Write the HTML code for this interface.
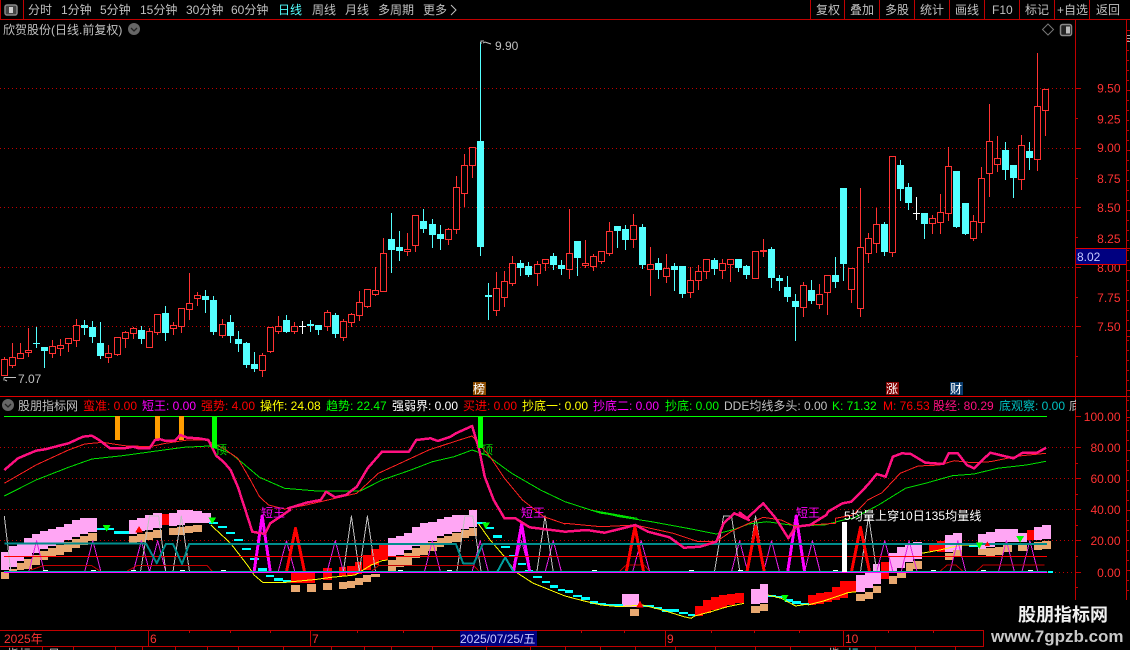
<!DOCTYPE html>
<html><head><meta charset="utf-8"><title>K线</title>
<style>
html,body{margin:0;padding:0;background:#000;width:1130px;height:650px;overflow:hidden}
svg{display:block}
text{font-family:"Liberation Sans","WenQuanYi Zen Hei","Noto Sans CJK SC",sans-serif;font-size:12px}
.g{fill:#c0c0c0}.r{fill:#ff3232}.m{fill:#ff00ff}.y{fill:#ffff00}.n{fill:#00ff00}.w{fill:#fff}.p{fill:#ff1080}.t{fill:#00c0c0}
</style></head><body>
<svg id="s" xmlns="http://www.w3.org/2000/svg" width="1130" height="650" viewBox="0 0 1130 650">
<rect width="1130" height="650" fill="#000"/>
<g id="chart" shape-rendering="crispEdges"></g>
<g shape-rendering="crispEdges">
<rect x="0" y="19" width="1130" height="1" fill="#c00000"/>
<rect x="0" y="0" width="1" height="19" fill="#c00000"/><rect x="23" y="0" width="1" height="19" fill="#c00000"/>
<rect x="810" y="0" width="1" height="19" fill="#c00000"/><rect x="844" y="0" width="1" height="19" fill="#c00000"/><rect x="879" y="0" width="1" height="19" fill="#c00000"/><rect x="914" y="0" width="1" height="19" fill="#c00000"/><rect x="949" y="0" width="1" height="19" fill="#c00000"/><rect x="984" y="0" width="1" height="19" fill="#c00000"/><rect x="1019" y="0" width="1" height="19" fill="#c00000"/><rect x="1054" y="0" width="1" height="19" fill="#c00000"/><rect x="1089" y="0" width="1" height="19" fill="#c00000"/>
<rect x="1075" y="20" width="1" height="580" fill="#c00000"/>
<rect x="1126" y="20" width="1" height="580" fill="#c00000"/>
<rect x="0" y="396" width="1126" height="1" fill="#e00000"/>
<rect x="0" y="630" width="983" height="1" fill="#c00000"/><rect x="0" y="646" width="983" height="1" fill="#c00000"/>
<rect x="983" y="630" width="1" height="17" fill="#c00000"/>
<rect x="148" y="630" width="1" height="16" fill="#c00000"/><rect x="310" y="630" width="1" height="16" fill="#c00000"/><rect x="665" y="630" width="1" height="16" fill="#c00000"/><rect x="843" y="630" width="1" height="16" fill="#c00000"/>
<rect x="1127" y="35" width="3" height="1" fill="#aaa"/><rect x="1127" y="38" width="3" height="1" fill="#aaa"/><rect x="1127" y="41" width="3" height="1" fill="#aaa"/>
</g>
<rect x="5" y="5" width="12" height="10" rx="2" fill="#444" stroke="#888" stroke-width="1.5"/><rect x="9" y="7" width="4" height="6" fill="#ccc"/>
<text x="28" y="14" class="g">分时</text><text x="61" y="14" class="g">1分钟</text><text x="100" y="14" class="g">5分钟</text><text x="140" y="14" class="g">15分钟</text><text x="186" y="14" class="g">30分钟</text><text x="231" y="14" class="g">60分钟</text>
<text x="278" y="14" style="fill:#54ffff">日线</text><text x="312" y="14" class="g">周线</text><text x="345" y="14" class="g">月线</text><text x="378" y="14" class="g">多周期</text><text x="423" y="14" class="g">更多</text>
<path d="M451 5l5 5-5 5" fill="none" stroke="#c0c0c0"/>
<text x="816" y="14" class="g">复权</text><text x="850" y="14" class="g">叠加</text><text x="885" y="14" class="g">多股</text><text x="920" y="14" class="g">统计</text><text x="955" y="14" class="g">画线</text><text x="992" y="14" class="g">F10</text><text x="1025" y="14" class="g">标记</text><text x="1057" y="14" class="g">+自选</text><text x="1096" y="14" class="g">返回</text>
<text x="3" y="34" class="g">欣贺股份(日线.前复权)</text>
<circle cx="134" cy="29" r="6" fill="#666"/><path d="M131 28l3 3 3-3" fill="none" stroke="#222" stroke-width="1.3"/>
<path d="M1048 24l5.500 5.500-5.500 5.500-5.500-5.500z" fill="none" stroke="#777"/>
<rect x="1060.500" y="24.500" width="11" height="11" rx="2" fill="#222" stroke="#888" stroke-width="1.500"/><rect x="1066" y="26.500" width="4" height="7" fill="#bbb"/>
<text x="1120.500" y="92.500" text-anchor="end" class="r">9.50</text><text x="1120.500" y="123.500" text-anchor="end" class="r">9.25</text><text x="1120.500" y="152" text-anchor="end" class="r">9.00</text><text x="1120.500" y="183" text-anchor="end" class="r">8.75</text><text x="1120.500" y="212" text-anchor="end" class="r">8.50</text><text x="1120.500" y="243" text-anchor="end" class="r">8.25</text><text x="1120.500" y="272" text-anchor="end" class="r">8.00</text><text x="1120.500" y="302" text-anchor="end" class="r">7.75</text><text x="1120.500" y="331" text-anchor="end" class="r">7.50</text>
<rect x="1076" y="248" width="50" height="17" fill="#000080"/><rect x="1076" y="248" width="50" height="1" fill="#e00000"/><rect x="1076" y="264" width="50" height="1" fill="#e00000"/>
<text x="1077" y="261" style="fill:#c8c8ff">8.02</text>
<text x="495" y="50" class="g">9.90</text><path d="M481 44V41h3M483 43l2-1 3 1 3 1" fill="none" stroke="#c0c0c0"/>
<text x="18" y="383" class="g">7.07</text><path d="M4 377.500h12M4 377.500v3M5 380l2 1" fill="none" stroke="#c0c0c0"/>
<rect x="473" y="382" width="13" height="13" fill="#8a4a00"/><text x="473" y="393" class="w">榜</text>
<rect x="886" y="382" width="13" height="13" fill="#800000"/><text x="886" y="393" class="w">涨</text>
<rect x="950" y="382" width="13" height="13" fill="#0a3c6e"/><text x="950" y="393" class="w">财</text>
<circle cx="8" cy="405" r="6" fill="#666"/><path d="M5 404l3 3 3-3" fill="none" stroke="#222" stroke-width="1.300"/>
<text x="18" y="410" class="g">股朋指标网</text>
<text x="83" y="410" style="fill:#ff0000">蛮准: 0.00</text><text x="142" y="410" class="m">短王: 0.00</text><text x="201" y="410" style="fill:#ff0000">强势: 4.00</text><text x="260" y="410" class="y">操作: 24.08</text><text x="326" y="410" class="n">趋势: 22.47</text><text x="392" y="410" class="w">强弱界: 0.00</text><text x="463" y="410" style="fill:#ff0000">买进: 0.00</text><text x="522" y="410" class="y">抄底一: 0.00</text><text x="593" y="410" class="m">抄底二: 0.00</text><text x="665" y="410" class="n">抄底: 0.00</text><text x="724" y="410" class="g">DDE均线多头: 0.00</text><text x="832" y="410" class="n">K: 71.32</text><text x="883" y="410" style="fill:#ff0000">M: 76.53</text><text x="933" y="410" class="p">股经: 80.29</text><text x="999" y="410" class="t">底观察: 0.00</text><text x="1069" y="410" class="g">底</text>
<rect x="1076" y="398" width="50" height="18" fill="#000"/>
<text x="1120.500" y="421" text-anchor="end" class="r">100.00</text><text x="1120.500" y="452" text-anchor="end" class="r">80.00</text><text x="1120.500" y="483" text-anchor="end" class="r">60.00</text><text x="1120.500" y="514" text-anchor="end" class="r">40.00</text><text x="1120.500" y="545" text-anchor="end" class="r">20.00</text><text x="1120.500" y="577" text-anchor="end" class="r">0.00</text>
<text x="261" y="517" class="m">短王</text><text x="521" y="517" class="m">短王</text><text x="796" y="517" class="m">短王</text>
<text x="215" y="454" style="fill:#00d000">顶</text><text x="481" y="454" style="fill:#00d000">顶</text>
<rect x="212" y="416" width="5" height="32" fill="#00ff00" shape-rendering="crispEdges"/><rect x="478" y="416" width="5" height="32" fill="#00ff00" shape-rendering="crispEdges"/>
<text x="844" y="520" class="w" style="letter-spacing:.1px">5均量上穿10日135均量线</text>
<text x="4" y="643" class="r">2025年</text><text x="150" y="643" class="r">6</text><text x="312" y="643" class="r">7</text>
<rect x="460" y="631" width="77" height="15" fill="#000080"/><text x="460" y="643" style="fill:#c8c8ff">2025/07/25/五</text>
<text x="667" y="643" class="r">9</text><text x="845" y="643" class="r">10</text>
<text x="7" y="658" class="g">指标</text><text x="48" y="658" class="g">日</text><text x="828" y="658" class="g">指</text><text x="847" y="658" style="fill:#54ffff">标</text>
<text x="1018" y="621" style="font-size:18px;font-weight:bold;fill:#f0f0f0">股朋指标网</text>
<text x="991" y="642" style="font-size:17px;font-weight:bold;fill:#c8c8c8">www.7gpzb.com</text>
<script>
var g=document.getElementById('chart'),NS='http://www.w3.org/2000/svg';
function add(t,a){var e=document.createElementNS(NS,t);for(var k in a)e.setAttribute(k,a[k]);g.appendChild(e);return e}
function rect(x,y,w,h,f){add('rect',{x:Math.round(x),y:Math.round(y),width:Math.max(1,Math.round(w)),height:Math.max(1,Math.round(h)),fill:f})}
function S(xo,yo,s){return s.trim().split(/\s+/).map(function(p){var a=p.split(',').map(Number);return [xo+a[0]/2.775,yo+a[1]/3]})}
var A=function(s){return S(0,390,s)},B=function(s){return S(565,390,s)},C=function(s){return S(0,510,s)},D=function(s){return S(565,510,s)};
function pl(pts,c,w){add('polyline',{points:pts.map(function(p){return p[0].toFixed(1)+','+p[1].toFixed(1)}).join(' '),fill:'none',stroke:c,'stroke-width':w,'stroke-linejoin':'round'})}
function blocks(xo,s,c){s.trim().split(/\s+/).forEach(function(p){var a=p.split(',').map(Number);var x0=Math.round(xo+a[0]/2.775),x1=Math.round(xo+a[1]/2.775);rect(x0,510+a[2]/3,x1-x0,(a[3]-a[2])/3,c)})}
function dot(y){add('path',{d:'M0 '+y+'H1075',stroke:'#c00000','stroke-dasharray':'1 3',fill:'none'})}
[88.5,148.5,207.5,267.5,326.5,447.5,478.5,509.5,540.5].forEach(dot);
add('path',{d:'M1047 572.500H1075',stroke:'#c00000','stroke-dasharray':'1 3',fill:'none'});
[88,148,207,267,326,447,478,509,540,572,416].forEach(function(y){rect(1075,y,6,1,'#c00000')});
[118,178,237,297,356,463,494,525,556,587].forEach(function(y){rect(1075,y,3,1,'#c00000')});
for(var y=30;y<600;y+=10){rect(1127,y,y%60==30?3:2,1,'#c00000')}
rect(1126,19,4,1,'#c00000');rect(1126,248,4,1,'#c00000');rect(1126,336,4,1,'#c00000');rect(1126,396,4,1,'#c00000');rect(1126,417,4,1,'#c00000');
var T=[525,637,750,992,1118];T.forEach(function(z){rect(z/2.775,630,1,3,'#c00000')});
[45,165,405,525,650,895,1020].forEach(function(z){rect(565+z/2.775,630,1,3,'#c00000')});
[42,73,115,142,175,207,238,283,331,364,391,432,486,530,565,600,635,675,715,755,790,835,875,915,955].forEach(function(x){rect(x,646,1,4,'#c00000')});
/* candles */
var cd="r,472,478,524,526 r,430,472,494,500 r,430,460,473,473 r,385,450,455,468 c,381,430,432,440 c,441,441,453,500 r,420,439,458,470 r,418,436,443,465 r,415,415,428,453 r,357,376,419,438 c,361,375,384,402 c,363,381,411,426 c,366,429,468,474 r,435,460,470,486 r,412,412,461,465 r,393,397,413,441 r,380,385,398,414 c,378,390,417,429 r,385,394,440,440 r,343,343,395,402 c,318,339,399,420 r,366,376,383,402 r,325,325,377,396 r,220,310,326,357 r,277,286,293,315 c,270,288,300,336 c,289,300,396,402 r,357,373,404,411 c,345,366,408,426 c,393,417,432,453 c,426,429,495,501 c,456,492,507,513 r,459,466,509,528 r,382,382,452,456 r,348,379,392,399 c,345,360,396,396 r,366,379,392,399 w,363,379,381,399 c,360,372,378,393 c,375,375,390,402 r,330,337,378,390 c,339,345,402,411 r,357,364,411,420 r,339,343,365,378 r,273,307,344,360 r,268,268,318,321 r,201,271,281,285 r,114,160,272,272 c,39,117,150,216 c,93,141,153,180 r,99,148,152,165 r,46,46,134,153 c,27,63,87,96 c,57,72,105,141 c,75,102,117,147 r,84,88,116,132 r,-72,-39,86,100 r,-138,-105,-21,18 r,-159,-159,-105,-70 c,-474,-177,141,165 c,250,286,290,357 r,217,265,329,345 r,213,244,290,318 r,168,190,248,255 c,180,190,204,225 c,186,198,225,228 r,183,193,218,255 r,178,178,188,210 c,159,168,195,207 c,180,195,207,222 r,27,160,208,234 c,123,123,174,225 r,120,190,194,200 r,162,169,197,210 r,154,154,182,188 r,66,94,158,164 c,78,78,93,141 c,75,87,120,147 r,42,76,116,141 c,72,81,195,204 r,141,193,208,285 c,175,189,210,234 r,162,205,227,246 c,190,198,210,270 c,198,198,282,291 r,201,241,276,291 r,195,214,241,267 r,178,178,214,234 c,174,180,207,222 r,177,190,211,234 r,178,178,193,243 c,177,177,204,213 c,195,198,225,234 r,154,154,233,233 r,117,150,154,168 c,141,147,234,261 c,225,234,243,270 c,228,261,291,303 c,282,303,321,420 r,246,256,322,348 c,240,270,303,309 r,252,283,311,324 r,226,226,275,342 c,171,225,246,261 c,-36,-36,192,240 r,204,205,266,306 r,-36,142,323,348 r,100,115,160,186 r,24,73,130,156 c,66,72,156,165 r,-132,-132,155,168 c,-120,-105,-34,0 c,-51,-39,9,27 w,-9,38,40,57 c,39,39,72,114 r,45,54,68,99 r,-18,36,65,99 r,-159,-102,39,60 c,-87,-87,81,81 c,9,9,102,102 r,45,63,113,120 r,-99,-66,67,96 r,-288,-177,-81,-12 r,-192,-126,-108,-87 c,-174,-150,-90,-63 c,-105,-105,-66,-9 r,-195,-165,-63,-33 c,-174,-147,-126,-93 r,-441,-282,-123,-90 r,-333,-333,-270,-195".split(' ');
cd.forEach(function(s,i){var a=s.split(','),t=a[0],h=+a[1],o=+a[2],b=+a[3],l=+a[4];
 var X=Math.floor(4+8.076*i),Y=function(z){return Math.round(200+z/3)};
 var c=t=='r'?'#ff3232':t=='c'?'#54ffff':'#ffffff';
 rect(X,Y(h),1,Y(l)-Y(h)+1,c);
 if(t=='r'){rect(X-3,Y(o),7,Y(b)-Y(o)+1,c);if(Y(b)-Y(o)>1)rect(X-2,Y(o)+1,5,Y(b)-Y(o)-1,'#000')}
 else{rect(X-3,Y(o),7,Math.max(1,Y(b)-Y(o)),c)}
});
rect(4,416,1043,1,'#00ff00');
rect(115,416,5,24,'#ff9c00');rect(155,416,5,24,'#ff9c00');rect(179,416,5,24,'#ff9c00');
/* lower panel blocks */
var PK='#ffa6f4',TN='#e8a870',RD='#ff0000',CY='#00ffff',YL='#ffff00';
blocks(0,"3,25,125,180 25,47,108,172 47,67,100,155 67,89,85,142 89,111,72,130 111,133,64,117 133,155,57,108 155,178,50,100 178,200,43,90 200,222,30,82 222,245,24,72 245,269,24,65 358,380,30,72 380,403,25,65 403,425,15,60 425,450,10,55 470,492,8,48 492,514,0,45 514,536,0,40 536,560,3,38 560,585,8,38 1076,1098,85,140 1098,1120,78,135 1120,1143,70,122 1143,1165,52,110 1165,1188,40,105 1188,1212,35,92 1212,1233,28,78 1233,1255,22,72 1255,1280,15,65 1280,1302,14,55 1302,1323,0,50",PK);
blocks(0,"3,25,185,207 25,47,177,187 47,67,160,180 67,89,148,178 89,111,135,165 111,133,122,150 133,155,113,140 155,178,105,135 178,200,95,125 200,222,87,115 222,245,77,105 245,269,70,95 358,380,78,100 380,403,72,95 403,425,65,90 425,450,60,85 470,492,55,75 492,514,50,75 514,536,48,70 536,560,45,65 808,832,225,245 852,876,222,245 896,920,218,240 941,963,215,237 963,985,212,233 985,1007,205,225 1007,1030,195,215 1030,1054,192,202 1076,1098,150,185 1098,1120,140,170 1120,1143,128,165 1143,1165,115,145 1165,1188,105,135 1188,1212,97,125 1212,1233,85,112 1233,1255,78,105 1255,1280,70,98 1280,1302,60,85 1302,1323,55,80",TN);
blocks(0,"450,470,12,45 808,875,190,220 895,920,175,212 940,960,172,198 962,985,168,195 985,1005,155,190 1007,1030,135,180 1030,1052,118,165 1052,1076,105,150",RD);
blocks(0,"270,315,55,62 315,358,62,72 580,605,35,42 605,630,48,53 628,652,67,72 650,675,88,95 672,697,115,122 695,718,145,152 717,742,175,183 738,760,195,202 760,785,205,213 785,808,210,215 1325,1350,37,42 1348,1370,50,56 1368,1393,75,83 1390,1415,108,113 1413,1437,135,140 1437,1460,158,165 1458,1480,180,185 1480,1503,197,203 1503,1525,213,220 1525,1548,225,233 1548,1568,237,243",CY);
blocks(565,"158,205,252,290 516,540,238,282 540,563,222,280 808,832,195,245 832,856,190,235 856,878,190,222 855,875,162,190 898,920,130,187 920,943,112,175 943,966,100,158 966,990,95,145 1055,1078,75,125 1078,1102,70,125 1145,1168,72,118 1168,1192,65,110 1192,1215,57,97 1215,1240,57,97 1240,1258,57,97 1258,1282,70,97 1302,1325,50,88 1325,1350,45,88",PK);
blocks(565,"180,205,297,317 516,540,288,308 540,563,282,302 808,832,252,272 832,856,245,265 856,878,227,248 898,920,198,222 920,945,190,205 945,966,160,185 966,990,152,175 1055,1078,130,152 1078,1102,120,140 1145,1168,118,137 1168,1192,113,137 1192,1215,110,135 1215,1240,105,125 1258,1282,105,122 1302,1325,95,120 1325,1350,92,115",TN);
blocks(565,"362,383,287,318 383,405,270,310 405,428,262,300 428,450,255,295 450,473,252,285 473,497,250,280 674,697,255,285 697,720,248,280 720,742,245,275 742,763,232,272 763,785,213,265 785,808,213,245 878,898,155,205 1010,1032,100,125 1032,1055,93,125 1282,1302,60,90",RD);
blocks(565,"0,22,240,250 22,47,255,262 45,70,262,270 70,92,272,280 92,115,278,285 113,160,282,288 215,248,285,290 248,270,292,297 270,315,297,305 315,340,305,312 340,362,312,318 563,585,255,262 585,610,258,265 610,632,267,275 630,655,272,282 655,677,278,285 1102,1122,100,107 1122,1145,103,112 1340,1355,184,189",CY);
pl(C("585,45 640,100 690,170 705,195 730,218 785,218 808,215 840,212 880,208 920,202 985,195 1030,165 1060,152 1075,150"),YL,1);
pl(C("1328,42 1360,90 1400,140 1430,185 1480,220 1568,258"),YL,1);
pl(D("0,258 50,272 100,285 150,290 215,285 270,300 330,320 350,325 360,318 405,305 450,290 497,280"),YL,1);
pl(D("563,255 600,265 640,288 675,282"),YL,1);
pl(D("674,285 720,272 785,248 808,245"),YL,1);
pl(D("990,130 1040,120 1100,105 1140,105"),YL,1);
/* triangles */
function tri(f,z0,t,z1,c,w){pl(f(z0+",185 "+((z0+z1)/2)+","+t+" "+z1+",185"),c,w)}
var TM='#e020e0',GY='#c0c0c0';
[[80,123],[235,280],[370,415],[415,460],[772,818],[908,953],[1178,1222],[1310,1355],[1425,1470],[1513,1558]].forEach(function(a){tri(C,a[0],92,a[1],TM,1)});
[[188,235],[462,507],[551,595],[665,708],[865,910],[933,977],[1068,1112],[1203,1247],[1268,1312]].forEach(function(a){tri(D,a[0],92,a[1],TM,1)});
pl(C("12,18 30,185"),GY,1);pl(C("390,185 415,18 440,18 460,185"),GY,1);pl(C("1268,185 1290,18 1312,18 1335,185"),GY,1);
[[480,526],[953,997],[997,1042],[1490,1535]].forEach(function(a){tri(C,a[0],18,a[1],GY,1)});
pl(D("415,185 440,18 462,18 485,185"),GY,1);tri(D,505,18,553,GY,1);tri(D,820,18,865,GY,1);
pl(C("85,180 120,167 255,167 280,185 350,185 380,167 575,167 590,185"),'#c00000',1);
pl(C("1030,185 1050,167 1315,167 1330,185"),'#c00000',1);
pl(D("150,185 170,165 220,165 235,185"),'#c00000',1);pl(D("1140,185 1160,165 1330,165"),'#c00000',1);pl(D("1040,185 1060,165 1085,165 1105,185"),'#c00000',1);
tri(C,795,55,845,RD,3);tri(D,170,50,218,RD,3);tri(D,505,50,553,RD,3);tri(D,795,52,845,RD,3);
tri(C,705,18,750,'#ff00ff',3);tri(C,1425,42,1470,'#ff00ff',3);tri(D,618,18,665,'#ff00ff',3);
pl(C("1380,185 1402,142 1425,185"),'#00a0a0',2);
/* lines */
rect(4,556,1043,1,'#ff0000');
pl(C("12,100 405,100 435,160 460,102 480,102 505,162 525,102 1265,102 1285,160 1315,160 1340,102 1568,102"),'#008c8c',2);
rect(565,543,482,2,'#008c8c');
rect(4,571,1043,1,'#00b0b0');rect(4,572,1043,1,'#ff00ff');
[125,258,370,505,618,1110,1245].forEach(function(z){rect(z/2.775-2,570,5,1,'#fff')});
[80,350,485,750,1020,1160,1290].forEach(function(z){rect(565+z/2.775-2,570,5,1,'#fff')});
rect(842,522,5,50,'#fff');
function fillTri(f,a,b,c,col){add('polygon',{points:f(a+' '+b+' '+c).map(function(p){return p[0].toFixed(1)+','+p[1].toFixed(1)}).join(' '),fill:col})}
fillTri(C,'285,45','307,45','296,65','#00ff00');fillTri(C,'578,22','600,22','589,42','#00ff00');fillTri(C,'1337,37','1360,37','1348,57','#00ff00');
fillTri(C,'375,68','397,68','386,48','#ff0000');
fillTri(D,'198,292','218,292','208,272','#ff0000');fillTri(D,'600,255','620,255','610,275','#00ff00');
fillTri(D,'1140,97','1160,97','1150,117','#00ff00');fillTri(D,'1252,78','1274,78','1263,98','#00ff00');fillTri(D,'1165,108','1180,108','1172,94','#ff0000');
/* MA lines */
pl(A("12,318 100,270 190,232 255,207 340,197 420,185 510,172 580,168 640,190 680,225 720,262 790,295 880,303 1000,303 1060,270 1140,240 1200,215 1260,200 1310,180 1350,195 1420,250 1500,300 1568,335").concat(B("0,335 100,370 200,385")).concat(D("70,0 150,20 240,35 340,55 420,72 470,58 510,42 560,35 640,47 720,45 790,25")).concat(B("800,385 870,345 945,295 1000,280 1075,257 1135,252 1200,235 1280,225 1335,214")),'#00e000',1);
pl(A("12,280 100,225 190,180 235,162 285,157 345,167 415,170 460,160 520,150 570,150 620,175 660,205 690,260 720,320 745,345 790,357 850,345 910,330 990,310 1050,250 1120,215 1190,180 1260,155 1310,138 1360,200 1400,265 1450,330 1515,385").concat(C("1510,20 1568,42")).concat(D("0,40 100,50 195,45 300,70 370,95 420,95 460,65 510,40 550,22 600,30 640,50 680,45 750,40")).concat(B("750,385 800,375 840,330 880,308 930,250 980,228 1040,225 1080,212 1130,218 1180,215 1260,198 1335,190")),'#ff2020',1);
pl(A("12,240 50,205 100,182 125,178 190,160 230,140 255,137 275,150 305,175 345,175 370,170 385,175 415,175 430,150 445,148 460,153 485,152 500,135 520,143 550,145 578,150 590,175 600,197 620,215 640,240 660,290 675,340 690,390").concat(C("700,65 735,72 750,40 805,0")).concat(A("800,355 850,338 890,330 905,305 930,322 960,315 990,290 1020,235 1060,185 1135,185 1155,150 1195,145 1215,153 1250,140 1265,130 1310,108 1330,180 1345,260 1370,330 1400,385")).concat(C("1430,25 1470,52 1568,65")).concat(D("60,60 110,68 160,55 195,45 230,65 290,82 330,113 375,110 420,95 440,40 470,10 510,30")).concat(B("485,368 505,385 550,340 585,385")).concat(D("620,85 640,50 680,45 725,15")).concat(B("730,365 770,340 795,335 840,285 865,252 890,260 910,200 935,190 960,192 1000,218 1050,222 1065,190 1090,190 1115,225 1135,235 1180,188 1245,205 1270,188 1310,188 1335,173")),'#ff1080',2.500);
</script>
</svg>
</body></html>
